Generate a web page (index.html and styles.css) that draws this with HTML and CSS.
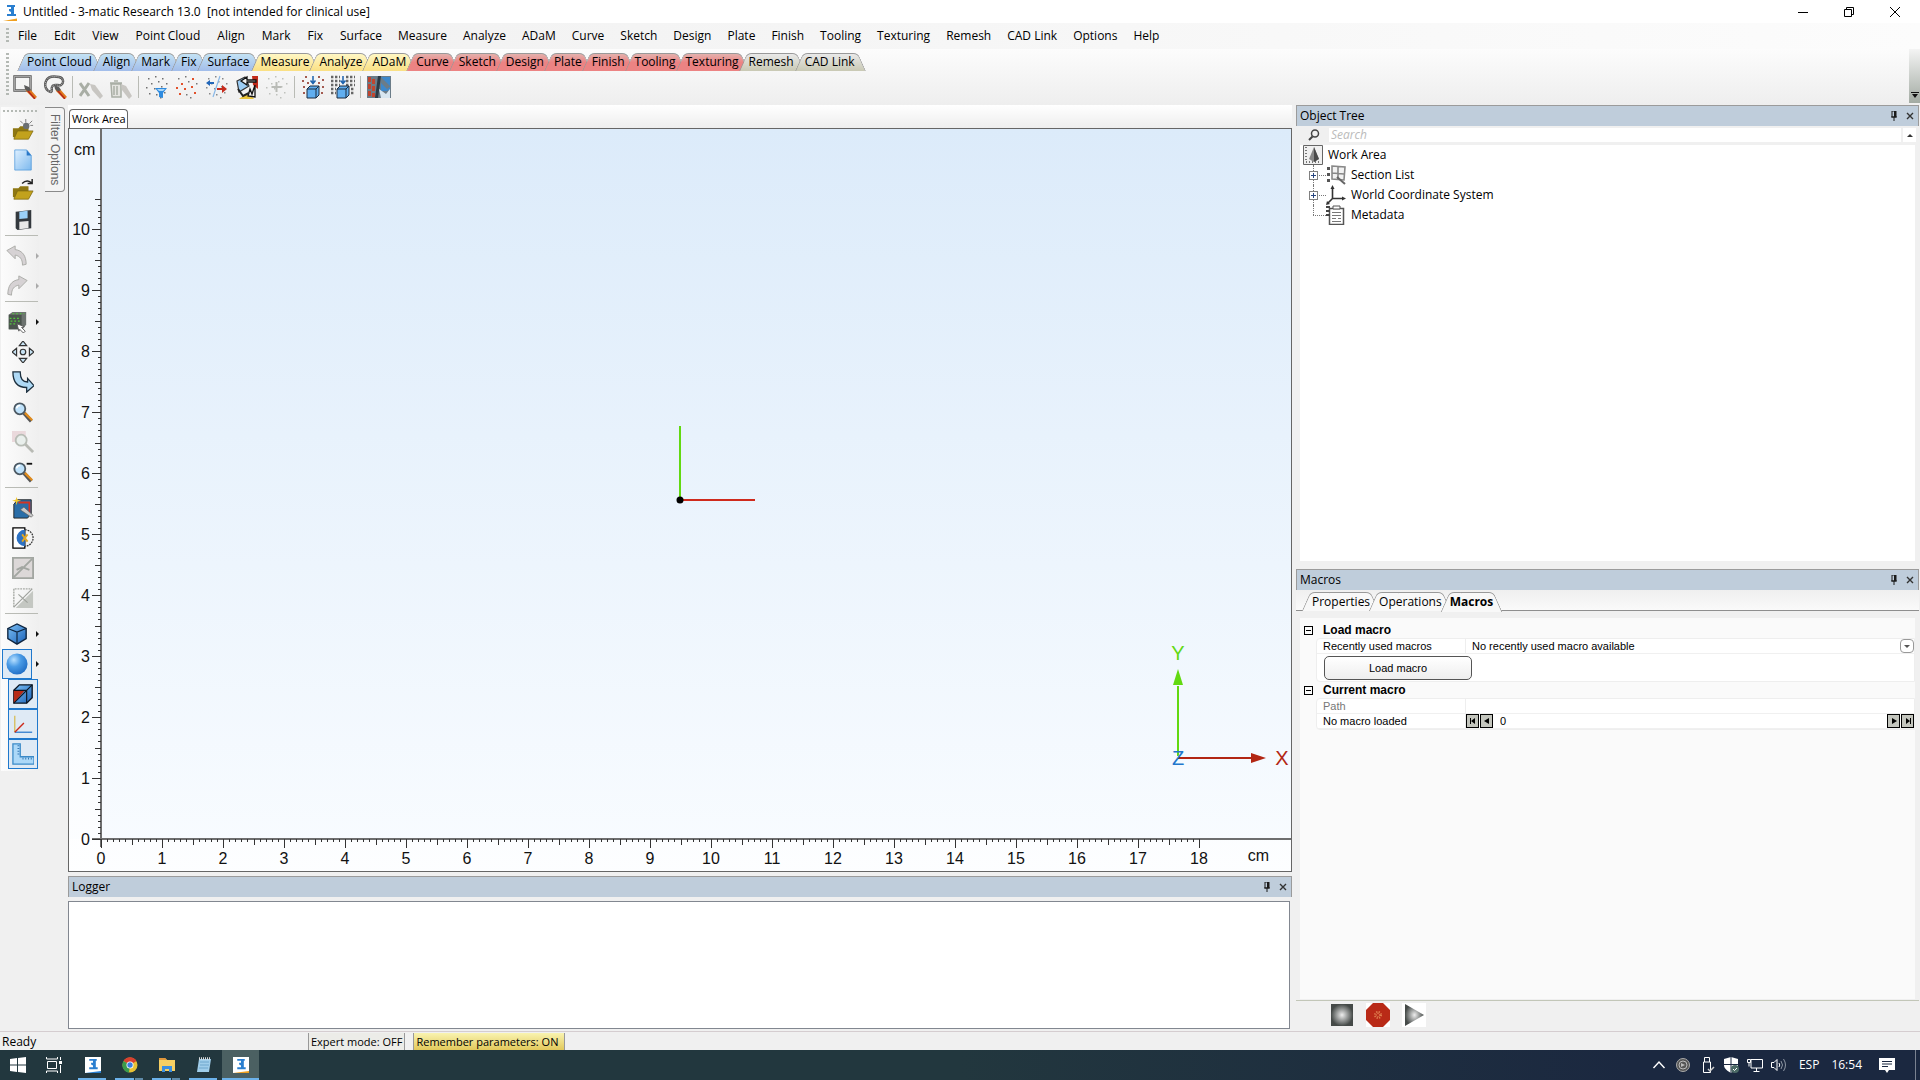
FILE: index.html
```html
<!DOCTYPE html>
<html lang="en">
<head>
    <meta charset="UTF-8">
    <meta name="viewport" content="width=device-width, initial-scale=1.0">
    <title>Untitled - 3-matic Research 13.0</title>
    <link rel="stylesheet" href="styles.css">
</head>
<body>

    <!-- shared shapes -->
    <svg class="defs" width="0" height="0" aria-hidden="true">
        <defs>
            <linearGradient id="blueGrad" x1="0" y1="0" x2="1" y2="1">
                <stop offset="0" stop-color="#7cc0f5"/><stop offset="1" stop-color="#1b62b8"/>
            </linearGradient>
            <linearGradient id="paleBlue" x1="0" y1="0" x2="1" y2="1">
                <stop offset="0" stop-color="#dff0ff"/><stop offset="1" stop-color="#7db9ee"/>
            </linearGradient>
            <radialGradient id="ball" cx="0.35" cy="0.3" r="0.75">
                <stop offset="0" stop-color="#b8e0ff"/><stop offset="0.45" stop-color="#4a9be6"/><stop offset="1" stop-color="#1f6cc4"/>
            </radialGradient>
            <radialGradient id="steel">
                <stop offset="0" stop-color="#eeeeee"/><stop offset="1" stop-color="#454a48"/>
            </radialGradient>
        </defs>
        <symbol id="brush" viewBox="0 0 24 24">
            <path d="M12 12l4 1 8 9-3 2-8-8z" fill="#e07a1c"/>
            <path d="M11 10l5 2 2 3-3 2-3-3z" fill="#5b5b5b"/>
            <path d="M15 16l7 8" stroke="#b5281a" stroke-width="1.500"/>
        </symbol>
        <symbol id="dots" viewBox="0 0 24 24">
            <path d="M3 3h1.500v1.500H3zM10 1h1.500v1.500H10zM17 3h1.500v1.500H17zM6 8h1.500v1.500H6zM13 6h1.500v1.500H13zM21 8h1.500v1.500H21zM1 12h1.500v1.500H1zM9 13h1.500v1.500H9zM16 11h1.500v1.500H16zM4 18h1.500v1.500H4zM11 19h1.500v1.500H11zM19 17h1.500v1.500H19zM15 22h1.500v1.500H15z"/>
        </symbol>
        <symbol id="box" viewBox="0 0 24 24">
            <path d="M6 14l3-3h9v9l-3 3H6z" fill="#60aef0" stroke="#1c2c40"/>
            <path d="M6 14h9v9M15 14l3-3" fill="none" stroke="#1c2c40"/>
            <path d="M12 1v7M9.500 5.500L12 8.500l2.500-3" fill="none" stroke="#1d62ad" stroke-width="1.500"/>
        </symbol>
        <symbol id="pin" viewBox="0 0 8 10">
            <path d="M2 0h4v6H2zM1 6h6M4 6v4" fill="none" stroke="#1a1a1a"/>
            <path d="M4 0h2v6H4z" fill="#1a1a1a"/>
        </symbol>
        <symbol id="close" viewBox="0 0 8 8">
            <path d="M1 1l6 6M7 1L1 7" stroke="#333" stroke-width="1.400"/>
        </symbol>
        <symbol id="lens" viewBox="0 0 24 24">
            <path d="M13 13l8 9" stroke="#555" stroke-width="4"/>
            <path d="M14 13l8 8" stroke="#e08c1e" stroke-width="2.600"/>
            <circle cx="8.500" cy="8.500" r="6" fill="#bfe2fb" stroke="#4b5862" stroke-width="2"/>
            <path d="M5 8a4 4 0 0 1 4-3" fill="none" stroke="#fff" stroke-width="1.600"/>
        </symbol>
        <symbol id="folder" viewBox="0 0 24 24">
            <path d="M1 10h6l2-2h9v12H1z" fill="#8e7713"/>
            <path d="M2 22l4-9h17l-5 9z" fill="#c2a21d" stroke="#7c6710" stroke-width="0.800"/>
        </symbol>
        <symbol id="logo" viewBox="0 0 16 16">
            <path d="M4 2h8v2h-1v7h2v2H4v-2h4V9L6 8V6h2V4H4z" fill="#2a7fd0"/>
        </symbol>
    </svg>

    <header class="title-bar">
        <svg class="app-icon" viewBox="0 0 16 18"><use href="#logo" width="16" height="16"/><path d="M0 18L14 15.500V18z" fill="#f0a020"/></svg>
        <h1>Untitled - 3-matic Research 13.0&nbsp; [not intended for clinical use]</h1>
        <div class="window-buttons">
            <button type="button" aria-label="Minimize"><svg width="12" height="12" viewBox="0 0 12 12"><path d="M1 6.500h10" stroke="#000"/></svg></button>
            <button type="button" aria-label="Restore"><svg width="12" height="12" viewBox="0 0 12 12"><path d="M1.500 3.500h7v7h-7zM3.500 3V1.500h7v7H9" fill="none" stroke="#000"/></svg></button>
            <button type="button" aria-label="Close"><svg width="12" height="12" viewBox="0 0 12 12"><path d="M1 1l10 10M11 1L1 11" stroke="#000"/></svg></button>
        </div>
    </header>

    <nav class="menu-bar">
        <span class="grip"></span>
        <button type="button">File</button>
        <button type="button">Edit</button>
        <button type="button">View</button>
        <button type="button">Point Cloud</button>
        <button type="button">Align</button>
        <button type="button">Mark</button>
        <button type="button">Fix</button>
        <button type="button">Surface</button>
        <button type="button">Measure</button>
        <button type="button">Analyze</button>
        <button type="button">ADaM</button>
        <button type="button">Curve</button>
        <button type="button">Sketch</button>
        <button type="button">Design</button>
        <button type="button">Plate</button>
        <button type="button">Finish</button>
        <button type="button">Tooling</button>
        <button type="button">Texturing</button>
        <button type="button">Remesh</button>
        <button type="button">CAD Link</button>
        <button type="button">Options</button>
        <button type="button">Help</button>
    </nav>

    <section class="ribbon">
        <span class="grip"></span>
        <div class="ribbon-body">
            <div class="ribbon-tabs">
                <button type="button" class="tab blue"><span>Point Cloud</span></button>
                <button type="button" class="tab blue"><span>Align</span></button>
                <button type="button" class="tab blue"><span>Mark</span></button>
                <button type="button" class="tab blue"><span>Fix</span></button>
                <button type="button" class="tab blue"><span>Surface</span></button>
                <button type="button" class="tab yellow"><span>Measure</span></button>
                <button type="button" class="tab yellow"><span>Analyze</span></button>
                <button type="button" class="tab yellow"><span>ADaM</span></button>
                <button type="button" class="tab red"><span>Curve</span></button>
                <button type="button" class="tab red"><span>Sketch</span></button>
                <button type="button" class="tab red"><span>Design</span></button>
                <button type="button" class="tab red"><span>Plate</span></button>
                <button type="button" class="tab red"><span>Finish</span></button>
                <button type="button" class="tab red"><span>Tooling</span></button>
                <button type="button" class="tab red"><span>Texturing</span></button>
                <button type="button" class="tab grey"><span>Remesh</span></button>
                <button type="button" class="tab grey"><span>CAD Link</span></button>
            </div>
            <div class="ribbon-tools">
                <button type="button" aria-label="Rectangle mark"><svg viewBox="0 0 24 24"><path d="M1.500 1.500h16v14h-16z" fill="#f4f4f4" stroke="#555" stroke-width="2.400"/><path d="M1.500 1.500h16v14h-16z" fill="none" stroke="#eee" stroke-width="1.200" stroke-dasharray="1 1"/><use href="#brush"/></svg></button>
                <button type="button" aria-label="Lasso mark"><svg viewBox="0 0 24 24"><path d="M8 17C3 16 1 11 3 6s8-5 13-4c5 1 5 6 2 8-3 1-8-2-9 2-1 2 1 4-1 5z" fill="#f4f4f4" stroke="#555" stroke-width="2.400"/><path d="M8 17C3 16 1 11 3 6s8-5 13-4c5 1 5 6 2 8-3 1-8-2-9 2-1 2 1 4-1 5z" fill="none" stroke="#ddd" stroke-width="0.800" stroke-dasharray="1 1"/><use href="#brush"/></svg></button>
                <span class="divider"></span>
                <button type="button" disabled aria-label="Unmark"><svg viewBox="0 0 24 24"><path d="M1 8l9 13M10 8L1 21" stroke="#a9aea5" stroke-width="3"/><path d="M11 9l5 1 8 11-3 3-8-9z" fill="#c8c6c2"/></svg></button>
                <button type="button" disabled aria-label="Delete marked"><svg viewBox="0 0 24 24"><path d="M2 9h10v13H3zM1 8h12M5 6h4M5 11v9M8 11v9" fill="#e4e4e0" stroke="#a9aea5" stroke-width="1.500"/><path d="M12 9l5 2 6 10-3 3-7-9z" fill="#c8c6c2"/></svg></button>
                <span class="divider"></span>
                <button type="button" aria-label="Filter points"><svg viewBox="0 0 24 24"><use href="#dots" fill="#707070"/><path d="M10 13h12l-4 5v5l-4-1v-4z" fill="#2d8be0"/><path d="M12 14h8l-2 2h-4z" fill="#a9d6f8"/></svg></button>
                <button type="button" aria-label="Reduce points"><svg viewBox="0 0 24 24"><use href="#dots" fill="#777"/><path d="M6 8h2v2H6zM17 3h2v2h-2zM9 13h2v2H9zM19 17h2v2h-2zM1 12h2v2H1zM16 11h2v2h-2zM4 18h2v2H4z" fill="#e2512b"/></svg></button>
                <button type="button" aria-label="Split points"><svg viewBox="0 0 24 24"><use href="#dots" fill="#888"/><path d="M15 1L8 22" stroke="#88b8e8" stroke-width="1.200"/><path d="M1 8l4-3v2h4v2H5v2z" fill="#2266b8"/><path d="M22 14l-5-4v3h-5v2h5v3z" fill="#c52a1c"/></svg></button>
                <button type="button" aria-label="Texture transfer"><svg viewBox="0 0 24 24"><path d="M2 6l8-4 4 9-10 6z" fill="#9ccdf5" stroke="#333" stroke-width="1.200"/><path d="M17 1h6v13l-5-4z" fill="#c22a1a"/><path d="M4 24q9-8 15 0z" fill="#e9c33a"/><path d="M21 5h-9V2L6 6l6 4V7h9zM20 10l-3 9-2-5-2 7 7 1z" fill="#f2f2f2" stroke="#111" stroke-width="1.300"/><path d="M3 14l5 7 6-3" fill="none" stroke="#222" stroke-width="2"/></svg></button>
                <button type="button" disabled aria-label="Add points"><svg viewBox="0 0 24 24"><use href="#dots" fill="#bfc1bd"/><path d="M10.500 7h2v4h4v2h-4v4h-2v-4h-4v-2h4z" fill="#b9bbb6"/></svg></button>
                <span class="divider"></span>
                <button type="button" aria-label="Wrap points"><svg viewBox="0 0 24 24"><path d="M4 1h2v2H4zM17 1h2v2h-2zM1 5h2v2H1zM6 7h2v2H6zM17 7h2v2h-2zM21 4h2v2h-2zM2 11h2v2H2zM21 11h2v2h-2zM2 17h2v2H2zM20 17h2v2h-2z" fill="#a35a50"/><use href="#box"/></svg></button>
                <button type="button" aria-label="Grid points"><svg viewBox="0 0 24 24"><path d="M0 2h9M0 6h9M0 10h9M0 14h5M0 18h5M15 2h9M15 6h9M15 10h9M20 14h4M20 18h4" stroke="#666" stroke-width="2.400" stroke-dasharray="2.400 1.600"/><use href="#box"/></svg></button>
                <span class="divider"></span>
                <button type="button" aria-label="Compare"><svg viewBox="0 0 24 24"><path d="M0 1h24v22H0z" fill="#6b7c88"/><path d="M1 2h3v5H1zM5 4h3v5H5zM1 9h3v5H1zM5 11h3v5H5zM1 16h3v5H1zM5 18h3v4H5z" fill="#c0452f"/><path d="M14 2h9v9zM14 8l8 8h-8zM20 14l3 8V12z" fill="#3d88cb"/><path d="M11 1h3l-3 22H8z" fill="#2c3a45"/><path d="M14 23l-2-9 7 5 4-5v9z" fill="#d8e6f0"/></svg></button>
            </div>
        </div>
        <button type="button" class="overflow" aria-label="Toolbar options"><svg width="8" height="6" viewBox="0 0 8 6"><path d="M0 0h8v1H0zM1 2h6L4 6z" fill="#111"/></svg></button>
    </section>

    <main class="workspace">
        <aside class="side-bar">
            <div class="side-tools">
                <span class="grip-h"></span>
                <button type="button" aria-label="Import"><svg viewBox="0 0 24 24"><use href="#folder"/><path d="M15 0v4M9 2l3 3M22 2l-3 3M23 7h-3" stroke="#777"/><circle cx="15.500" cy="7.500" r="3.500" fill="#6b6f72"/></svg></button>
                <button type="button" aria-label="New"><svg viewBox="0 0 24 24"><path d="M3 1h13l5 6v16H3z" fill="url(#paleBlue)" stroke="#4b97da" stroke-width="0.800"/><path d="M16 1v6h5z" fill="#2a78c8"/></svg></button>
                <button type="button" aria-label="Open"><svg viewBox="0 0 24 24"><use href="#folder"/><path d="M11 5q5-5 10-1M22 0v5h-5" fill="none" stroke="#222" stroke-width="1.600"/></svg></button>
                <button type="button" aria-label="Save"><svg viewBox="0 0 24 24"><path d="M4 3l17-2v20l-15 2-2-2z" fill="#33383d"/><path d="M8 3l9-1v8l-9 1z" fill="#9ad0f8"/><path d="M8 14l10-1v8l-10 1z" fill="#e8e8e8"/></svg></button>
                <span class="divider-h"></span>
                <button type="button" class="drop" disabled aria-label="Undo"><svg viewBox="0 0 24 24"><path d="M1 6l9-5v4c8 1 12 7 12 16l-4 1c0-7-3-10-8-11v4z" fill="#d6d2d4" stroke="#a8aaa5"/></svg></button>
                <button type="button" class="drop" disabled aria-label="Redo"><svg viewBox="0 0 24 24"><path d="M23 6l-9-5v4C6 6 2 12 2 21l4 1c0-7 3-10 8-11v4z" fill="#d6d2d4" stroke="#a8aaa5"/></svg></button>
                <span class="divider-h"></span>
                <button type="button" class="drop" aria-label="Select"><svg viewBox="0 0 24 24"><path d="M3 4l4-3h15v14l-4 5H3z" fill="#6d7370"/><path d="M3 4h14v16H3z" fill="#4a544d"/><path d="M4 8h12M5 11h11M4 14h7M7 3h13" stroke="#54c93c" stroke-width="1.300" stroke-dasharray="2 2"/><path d="M12 14l8 3-3 1 4 4-2 2-4-4-1 2z" fill="#fff" stroke="#555"/></svg></button>
                <button type="button" aria-label="Pan"><svg viewBox="0 0 24 24"><path d="M12 0l4 5H8zM12 24l4-5H8zM0 12l5-4v8zM24 12l-5-4v8z" fill="#c6e2f3" stroke="#333" stroke-width="1.300"/><circle cx="12" cy="12" r="3" fill="#c6e2f3" stroke="#333" stroke-width="1.300"/></svg></button>
                <button type="button" aria-label="Rotate"><svg viewBox="0 0 24 24"><path d="M1 1h8c0 8 3 11 8 11V8l7 8-8 7v-5C6 18 1 12 1 1z" fill="#aed9f5" stroke="#1c2f3e" stroke-width="1.400"/></svg></button>
                <button type="button" aria-label="Zoom"><svg viewBox="0 0 24 24"><use href="#lens"/></svg></button>
                <button type="button" disabled aria-label="Zoom selection"><svg viewBox="0 0 24 24"><path d="M0 0h15v12H0z" fill="#ead9dc"/><path d="M14 14l9 9" stroke="#b8bab4" stroke-width="3"/><circle cx="10" cy="10" r="6" fill="#e9efec" stroke="#b8bdb6" stroke-width="2"/></svg></button>
                <button type="button" aria-label="Unzoom"><svg viewBox="0 0 24 24"><use href="#lens"/><path d="M16 3h6" stroke="#111" stroke-width="2"/></svg></button>
                <span class="divider-h"></span>
                <button type="button" aria-label="Create section"><svg viewBox="0 0 24 24"><path d="M2 8l4-5h15v15l-4 5H2z" fill="#2b6ea8" stroke="#222"/><path d="M7 6h12v12" fill="none" stroke="#d33422" stroke-width="2"/><path d="M5 0l1 3 4 1-4 1-1 4-1-4-4-1 4-1z" fill="#f3c72a"/><path d="M9 14l4-3 10 9-2 2z" fill="#c9c9c9" stroke="#555" stroke-width="0.700"/></svg></button>
                <button type="button" aria-label="Clip"><svg viewBox="0 0 24 24"><path d="M1 1h13v22H1z" fill="#fff" stroke="#000" stroke-width="1.400"/><path d="M14 3a9 9 0 0 0 0 18z" fill="#2d72c4"/><path d="M14 3a9 9 0 0 1 0 18" fill="none" stroke="#333" stroke-width="1.300" stroke-dasharray="2 1"/><path d="M11 8l6 8M17 8l-6 8" stroke="#e2a725" stroke-width="2"/></svg></button>
                <button type="button" disabled aria-label="Flip clip"><svg viewBox="0 0 24 24"><path d="M1 1h22v22H1z" fill="#dcd8d8" stroke="#a2a6a1" stroke-width="2"/><path d="M2 22L22 2M5 14l6-3 8 3" stroke="#a2a6a1" stroke-width="2" fill="none"/></svg></button>
                <button type="button" disabled aria-label="Hide clip"><svg viewBox="0 0 24 24"><path d="M2 22V2h20" fill="none" stroke="#a7aaa5" stroke-width="1.500" stroke-dasharray="2 1"/><path d="M4 23L23 4v19z" fill="#c4c7c2"/><path d="M2 22L22 2M7 8l10 9" stroke="#9fa29d" stroke-width="1.300"/></svg></button>
                <span class="divider-h"></span>
                <button type="button" class="drop" aria-label="Standard views"><svg viewBox="0 0 24 24"><path d="M2 6l10-5 10 5v11l-10 6-10-6z" fill="url(#blueGrad)" stroke="#0e2540" stroke-width="1.500"/><path d="M2 6l10 4 10-4M12 10v13" fill="none" stroke="#0e2540" stroke-width="1.300"/></svg></button>
                <button type="button" class="drop active" aria-label="Shading"><svg viewBox="0 0 24 24"><circle cx="12" cy="12" r="11.500" fill="url(#ball)"/></svg></button>
                <button type="button" class="active" aria-label="Bounding box"><svg viewBox="0 0 24 24"><path d="M2 8l6-6h14v14l-6 6H2z" fill="url(#blueGrad)" stroke="#0c1622" stroke-width="1.500"/><path d="M2 8h12L2 22z" fill="#b72c18"/><path d="M2 8h14v14M2 22L22 2" fill="none" stroke="#0c1622" stroke-width="1.300"/></svg></button>
                <button type="button" class="active" aria-label="Axes"><svg viewBox="0 0 24 24"><path d="M3 3v18" stroke="#d8bf60" stroke-width="1.500"/><path d="M3 21h19" stroke="#3b83cf" stroke-width="1.500"/><path d="M3 21l10-10" stroke="#cc2a1a" stroke-width="1.500"/></svg></button>
                <button type="button" class="active" aria-label="Ruler"><svg viewBox="0 0 24 24"><path d="M1 1h8v14h15v8H1z" fill="#acd8f8" stroke="#3b8ac8" stroke-width="1.400"/><path d="M6 3h2M6 6h2M6 9h2M6 12h2M12 16v2M15 16v2M18 16v2M21 16v2" stroke="#2a6fae"/></svg></button>
            </div>
            <button type="button" class="filter-tab">Filter Options</button>
        </aside>

        <section class="centre">
            <div class="doc-tabs">
                <button type="button">Work Area</button>
            </div>
            <div class="viewport">
                <svg class="rulers" id="rulers"></svg>
                <svg class="origin" width="152" height="152" viewBox="0 0 152 152">
                    <path d="M76 2v74" stroke="#62d911" stroke-width="2"/>
                    <path d="M76 76h75" stroke="#cf2a1c" stroke-width="2"/>
                    <circle cx="76" cy="76" r="3.500"/>
                </svg>
                <svg class="triad" width="130" height="140" viewBox="0 -10 130 140">
                    <path d="M17 110V40" stroke="#62d911" stroke-width="2"/>
                    <path d="M17 23l5 16H12z" fill="#62d911"/>
                    <path d="M17 112h76" stroke="#b22613" stroke-width="2"/>
                    <path d="M105 112l-15-5v10z" fill="#b22613"/>
                    <text x="17" y="14" fill="#62d911">Y</text>
                    <text x="121" y="119" fill="#b22613">X</text>
                    <text x="17" y="119" fill="#2277cc">Z</text>
                </svg>
            </div>
            <div class="dock-title">
                <h2>Logger</h2>
                <button type="button" aria-label="Pin"><svg width="8" height="10"><use href="#pin"/></svg></button>
                <button type="button" aria-label="Close"><svg width="8" height="8"><use href="#close"/></svg></button>
            </div>
            <div class="log"></div>
        </section>

        <aside class="docks">
            <div class="dock-title">
                <h2>Object Tree</h2>
                <button type="button" aria-label="Pin"><svg width="8" height="10"><use href="#pin"/></svg></button>
                <button type="button" aria-label="Close"><svg width="8" height="8"><use href="#close"/></svg></button>
            </div>
            <div class="search">
                <label for="search" aria-label="Search"><svg width="12" height="12" viewBox="0 0 12 12"><circle cx="7" cy="4.500" r="3.500" fill="none" stroke="#444" stroke-width="1.500"/><path d="M4.500 7.500L1 11" stroke="#444" stroke-width="2"/></svg></label>
                <input type="text" id="search" placeholder="Search">
                <button type="button" aria-label="Collapse"><i></i></button>
            </div>
            <div class="tree">
                <div class="node root">
                    <svg viewBox="0 0 20 20"><path d="M0.500 0.500h19v19h-19z" fill="#f0f0f0" stroke="#666"/><path d="M3 2v15h15" fill="none" stroke="#777" stroke-width="2" stroke-dasharray="1 2"/><path d="M11 2l5 12-5 3-5-3z" fill="#888"/><path d="M11 2v15l5-3z" fill="#4a4a4a"/></svg>
                    <span>Work Area</span>
                </div>
                <ul>
                    <li class="node">
                        <button type="button" class="expander" aria-label="Expand"><svg viewBox="0 0 7 7"><path d="M1 3.500h5M3.500 1v5" stroke="#27457f"/></svg></button>
                        <svg viewBox="0 0 20 20"><path d="M1 2h3v3H1zM1 8h3v3H1zM1 14h3v3H1z" fill="#555"/><path d="M6 1l13 1-1 13-12-1zM12 2v12M6 8l12 1" fill="#f2f2f2" stroke="#888" stroke-width="1.600"/><path d="M11 12l8 7" stroke="#666" stroke-width="2"/></svg>
                        <span>Section List</span>
                    </li>
                    <li class="node">
                        <button type="button" class="expander" aria-label="Expand"><svg viewBox="0 0 7 7"><path d="M1 3.500h5M3.500 1v5" stroke="#27457f"/></svg></button>
                        <svg viewBox="0 0 20 20"><path d="M6.500 3v10.500H17M6.500 13.500L2 18" fill="none" stroke="#333" stroke-width="1.600"/><path d="M6.500 0l2 4h-4zM20 13.500l-4-2v4zM0 20l4-1-3-3z" fill="#333"/></svg>
                        <span>World Coordinate System</span>
                    </li>
                    <li class="node last">
                        <svg viewBox="0 0 20 20"><path d="M3.500 3.500h14v16h-14z" fill="#fff" stroke="#555" stroke-width="1.500"/><path d="M7 1h7v3H7z" fill="#fff" stroke="#555"/><path d="M6 7.500h9M6 10.500h9M6 13.500h4M12 13.500h3M6 16.500h9" stroke="#777"/><path d="M0 2h4M0 6h4M0 10h4" stroke="#444" stroke-width="2"/></svg>
                        <span>Metadata</span>
                    </li>
                </ul>
            </div>

            <div class="dock-title">
                <h2>Macros</h2>
                <button type="button" aria-label="Pin"><svg width="8" height="10"><use href="#pin"/></svg></button>
                <button type="button" aria-label="Close"><svg width="8" height="8"><use href="#close"/></svg></button>
            </div>
            <div class="dock-tabs">
                <button type="button" class="tab plain"><span>Properties</span></button>
                <button type="button" class="tab plain"><span>Operations</span></button>
                <button type="button" class="tab plain selected"><span>Macros</span></button>
            </div>
            <form class="macros">
                <h3><button type="button" class="collapser" aria-label="Collapse"><svg viewBox="0 0 7 7"><path d="M1 3.500h5" stroke="#000"/></svg></button>Load macro</h3>
                <div class="group">
                    <div class="row">
                        <label for="recent">Recently used macros</label>
                        <div class="value">
                            <select id="recent"><option>No recently used macro available</option></select>
                            <span class="combo-arrow"></span>
                        </div>
                    </div>
                    <div class="load"><button type="button">Load macro</button></div>
                </div>
                <h3><button type="button" class="collapser" aria-label="Collapse"><svg viewBox="0 0 7 7"><path d="M1 3.500h5" stroke="#000"/></svg></button>Current macro</h3>
                <div class="group">
                    <div class="row">
                        <span class="name muted">Path</span>
                        <div class="value"></div>
                    </div>
                    <div class="row">
                        <label for="step">No macro loaded</label>
                        <div class="value stepper">
                            <button type="button" aria-label="First"><svg width="6" height="6" viewBox="0 0 6 6"><path d="M0 0h1v6H0zM5 0v6L1 3z"/></svg></button>
                            <button type="button" aria-label="Previous"><svg width="6" height="6" viewBox="0 0 6 6"><path d="M5 0v6L0 3z"/></svg></button>
                            <input type="text" id="step" value="0">
                            <button type="button" aria-label="Next"><svg width="6" height="6" viewBox="0 0 6 6"><path d="M1 0v6l5-3z"/></svg></button>
                            <button type="button" aria-label="Last"><svg width="6" height="6" viewBox="0 0 6 6"><path d="M1 0v6l4-3zM5 0h1v6H5z"/></svg></button>
                        </div>
                    </div>
                </div>
            </form>
            <div class="recorder">
                <button type="button" aria-label="Stop"><svg width="24" height="24" viewBox="0 0 24 24"><path d="M1 1h22v22H1z" fill="url(#steel)"/></svg></button>
                <button type="button" aria-label="Record"><svg width="24" height="24" viewBox="0 0 24 24"><path d="M0 0h24v24H0z" fill="#fff"/><path d="M7 0h10l7 7v10l-7 7H7l-7-7V7z" fill="#b92a17"/><circle cx="12" cy="12" r="2.500" fill="none" stroke="#e08050" stroke-width="3" stroke-dasharray="1 1"/></svg></button>
                <button type="button" aria-label="Play"><svg width="24" height="24" viewBox="0 0 24 24"><path d="M0 0h24v24H0z" fill="#fff"/><path d="M3 1v22l19-11z" fill="url(#steel)"/></svg></button>
            </div>
        </aside>
    </main>

    <footer class="status-bar">
        <span class="ready">Ready</span>
        <button type="button" class="mode">Expert mode: OFF</button>
        <button type="button" class="mode on">Remember parameters: ON</button>
    </footer>

    <div class="taskbar">
        <button type="button" class="system" aria-label="Start"><svg viewBox="0 0 16 16"><path d="M0 2l7-1v6.500H0zM8 1l8-1v7.500H8zM0 8.500h7V15l-7-1zM8 8.500h8V16l-8-1z" fill="#fff"/></svg></button>
        <button type="button" class="system" aria-label="Task view"><svg viewBox="0 0 16 16"><path d="M1.500 4.500h9v7h-9zM0.500 0v2h11V0M0.500 16v-2h11v2M14.500 0v3M14.500 8v8" fill="none" stroke="#fff"/><path d="M13 4h3v3h-3z" fill="#fff"/></svg></button>
        <button type="button" class="open" aria-label="3-matic"><svg viewBox="0 0 16 16"><path d="M0 0h16v16H0z" fill="#fff"/><use href="#logo" width="16" height="15"/><path d="M0 16l16-2v2z" fill="#2a7fd0"/></svg></button>
        <button type="button" class="open stacked" aria-label="Chrome"><svg viewBox="0 0 16 16"><circle cx="8" cy="8" r="7.500" fill="#e8c034"/><path d="M8 8L1.500 4A7.500 7.500 0 0 1 14.500 4z" fill="#d8402f"/><path d="M8 8L1.500 4A7.500 7.500 0 0 0 7 15.500z" fill="#3a9b4c"/><circle cx="8" cy="8" r="3.500" fill="#fff"/><circle cx="8" cy="8" r="2.700" fill="#3b7fe0"/></svg></button>
        <button type="button" class="open stacked" aria-label="Explorer"><svg viewBox="0 0 16 16"><path d="M0 1h6l2 2h8v11H0z" fill="#f6cf63"/><path d="M0 1h6l2 2H0z" fill="#e0963a"/><path d="M3 15V9h10v6h-3v-3H6v3z" fill="#3a8ee0"/></svg></button>
        <button type="button" class="open" aria-label="Notepad"><svg viewBox="0 0 16 16"><path d="M3 2h12l-2 13H1z" fill="#9fcdea"/><path d="M4 5h9M4 8h9M3 11h9" stroke="#6ea6cc"/><path d="M3 1.500h12" stroke="#ddd" stroke-width="2.500" stroke-dasharray="1 1"/></svg></button>
        <button type="button" class="open current" aria-label="3-matic Research"><svg viewBox="0 0 16 16"><path d="M0 0h16v16H0z" fill="#fff"/><use href="#logo" width="16" height="15"/><path d="M0 16l16-2v2z" fill="#f0a020"/></svg></button>

        <div class="tray">
            <svg viewBox="0 0 16 16"><path d="M2.500 11L8 5l5.500 6" fill="none" stroke="#fff" stroke-width="1.400"/></svg>
            <svg viewBox="0 0 16 16"><circle cx="8" cy="8" r="6.500" fill="#555" stroke="#aaa"/><circle cx="8" cy="8" r="4" fill="none" stroke="#bbb"/><path d="M6 6l4 2-4 2z" fill="#bbb"/></svg>
            <svg viewBox="0 0 16 16"><path d="M5.500 5V.5h5V5M4.500 5h7v10.500h-7z" fill="none" stroke="#fff"/><path d="M9 12l2 2 4-4" fill="none" stroke="#ccc" stroke-width="1.500"/></svg>
            <svg viewBox="0 0 16 16"><path d="M8 0l7 2v6c0 4-4 6-7 8-3-2-7-4-7-8V2z" fill="#fff"/><path d="M8 0v16M1 7.500h14" stroke="#1b2840"/><circle cx="12" cy="12" r="4" fill="#4c6a66"/><path d="M10 12l1.500 1.500L14 11" fill="none" stroke="#fff"/></svg>
            <svg viewBox="0 0 16 16"><path d="M4 2.500h11.500v8.500H4zM9.500 11v3M6.500 14.500h6M.5 2.500h3v3h-3zM2 5.500v4" fill="none" stroke="#fff"/></svg>
            <svg viewBox="0 0 16 16"><path d="M.5 5.500H3l3-3v11l-3-3H.5z" fill="none" stroke="#fff"/><path d="M8 6q1.500 2 0 4" fill="none" stroke="#fff"/><path d="M10 4q3 4 0 8M12.500 2q4 6 0 12" fill="none" stroke="#8d96a3"/></svg>
            <span class="lang">ESP</span>
            <time>16:54</time>
            <svg viewBox="0 0 16 16"><path d="M0 1h16v12h-6l-2 3-2-3H0z" fill="#fff"/><path d="M3 4.500h10M3 7h10M3 9.500h6" stroke="#1b2840"/></svg>
        </div>
    </div>

    <script>
        // One centimetre on screen, and the width of the ruler strips
        var CM = 61;
        var STRIP = 32;
        var svg = document.getElementById('rulers');

        function add(name, attrs, text) {
            var el = document.createElementNS('http://www.w3.org/2000/svg', name);
            for (var key in attrs) {
                el.setAttribute(key, attrs[key]);
            }
            if (text !== undefined) {
                el.textContent = text;
            }
            svg.appendChild(el);
        }

        function drawRulers() {
            var w = svg.clientWidth;
            var h = svg.clientHeight;
            var x0 = STRIP;
            var y0 = h - STRIP;
            var i, pos, len, path = '';
            svg.innerHTML = '';

            add('path', { d: 'M' + x0 + ' 0V' + (y0 + 8) + 'M' + (x0 - 9) + ' ' + y0 + 'H' + w, 'class': 'axis' });

            for (i = 0; i * CM / 10 < w - 120; i++) {
                pos = Math.round(x0 + i * CM / 10);
                len = i % 10 === 0 ? 9 : i % 5 === 0 ? 6 : 3;
                path += 'M' + pos + ' ' + y0 + 'v' + len;
                if (i % 10 === 0) {
                    add('text', { x: pos, y: y0 + 25, 'text-anchor': 'middle' }, i / 10);
                }
            }
            for (i = 0; i * CM / 10 < y0 - 65; i++) {
                pos = Math.round(y0 - i * CM / 10);
                len = i % 10 === 0 ? 9 : i % 5 === 0 ? 6 : 3;
                path += 'M' + x0 + ' ' + pos + 'h-' + len;
                if (i % 10 === 0) {
                    add('text', { x: x0 - 11, y: pos + 6, 'text-anchor': 'end' }, i / 10);
                }
            }
            add('path', { d: path, 'class': 'ticks' });
            add('text', { x: 5, y: 26 }, 'cm');
            add('text', { x: w - 22, y: y0 + 22, 'text-anchor': 'end' }, 'cm');
        }

        drawRulers();
        window.addEventListener('resize', drawRulers);
    </script>

</body>
</html>
```
FILE: styles.css
```css
* {
    box-sizing: border-box;
}

body {
    margin: 0;
    height: 100vh;
    display: flex;
    flex-direction: column;
    background-color: #f0f0f0;
    font-family: "Open Sans", "Noto Sans", sans-serif;
    font-size: 12px;
    line-height: 16px;
    color: #000;
    overflow: hidden;
}

button {
    margin: 0;
    padding: 0;
    border: none;
    background: none;
    font: inherit;
    color: inherit;
}

h1, h2, h3 {
    margin: 0;
    font-size: 12px;
    font-weight: normal;
}

svg {
    display: block;
}

.defs {
    position: absolute;
}

/* Title bar */
.title-bar {
    height: 23px;
    flex: none;
    display: flex;
    align-items: center;
    padding-left: 3px;
    background-color: #fff;
}

.app-icon {
    width: 16px;
    height: 18px;
    margin-right: 4px;
}

.window-buttons {
    display: flex;
    margin-left: auto;
    padding-right: 2px;
}

.window-buttons button {
    width: 46px;
    display: flex;
    justify-content: center;
}

/* Menu */
.menu-bar {
    height: 26px;
    flex: none;
    display: flex;
    align-items: center;
    gap: 17px;
    background: linear-gradient(to right, #f0f0f0, #fcfcfc);
}

.menu-bar button:nth-child(n+10) {
    margin-left: -1px;
}

.grip {
    width: 3px;
    height: 16px;
    margin: 0 -8px 0 6px;
    background: repeating-linear-gradient(#b4b9b4 0 2px, transparent 2px 4px);
}

/* Ribbon */
.ribbon {
    height: 56px;
    flex: none;
    display: flex;
    background: linear-gradient(#fcfcfc, #eeeeee);
}

.ribbon .grip {
    height: 44px;
    margin: 4px 0 0 6px;
}

.ribbon-body {
    flex: 1;
    padding: 4px 0 0 8px;
}

.ribbon-tabs {
    display: flex;
}

.tab {
    position: relative;
    height: 18px;
    margin-right: -10px;
    padding: 0 11px 0 10px;
}

.tab span {
    position: relative;
    z-index: 1;
}

.tab::before,
.tab::after {
    content: "";
    position: absolute;
    top: 0;
    bottom: 0;
    background: inherit;
    border-top: 1px solid #999;
}

/* slanted halves of the tab */
.tab::before {
    left: 4px;
    right: 40%;
    border-left: 1px solid #999;
    border-radius: 5px 0 0 0;
    transform: skewX(-24deg);
}

.tab::after {
    left: 40%;
    right: 4px;
    border-right: 1px solid #999;
    border-radius: 0 5px 0 0;
    transform: skewX(24deg);
}

.yellow,
.red {
    padding-right: 10px;
}

.blue::before, .blue::after {
    background: linear-gradient(#c3e2f4, #a2bdea);
}

.yellow::before, .yellow::after {
    background: linear-gradient(#fff7c4, #fae084);
}

.red::before, .red::after {
    background: linear-gradient(#e3b1ad, #ec8383 50%);
}

.grey::before, .grey::after {
    background: linear-gradient(#e9e9e9, #c9c9b4);
}

.ribbon-tools {
    display: flex;
    align-items: center;
    gap: 6px;
    height: 24px;
    margin: 4px 0 0 -4px;
}

.ribbon-tools button {
    width: 24px;
    height: 24px;
}

.divider {
    width: 1px;
    height: 22px;
    margin-left: -1px;
    background-color: #b9bbb5;
}

.overflow {
    width: 11px;
    display: flex;
    align-items: flex-end;
    justify-content: center;
    padding-bottom: 5px;
    background: linear-gradient(#f4f4f4, #a3aba3);
    border-bottom: 2px solid #f0f0f0;
}

/* Main area */
.workspace {
    flex: 1;
    min-height: 0;
    display: flex;
}

.side-bar {
    width: 68px;
    flex: none;
    display: flex;
    align-items: flex-start;
    padding: 2px 0 0 1px;
    gap: 6px;
}

.side-tools {
    width: 38px;
    display: flex;
    flex-direction: column;
    align-items: flex-end;
    padding-right: 1px;
    padding-bottom: 2px;
    background: linear-gradient(to right, #fcfcfc, #efefef);
}

.side-tools button {
    position: relative;
    width: 30px;
    height: 30px;
    padding: 3px;
    border: 1px solid transparent;
}

.side-tools svg {
    width: 22px;
    height: 22px;
}

.side-tools button.active {
    background-color: #dfeaf5;
    border-color: #1f78cc;
}

.side-tools .drop {
    align-self: flex-start;
    margin-left: 1px;
}

.drop::after {
    content: "";
    position: absolute;
    left: 33px;
    top: 11px;
    border: 3px solid transparent;
    border-left-color: #111;
    border-right: none;
}

.drop:disabled::after {
    border-left-color: #aaa;
}

.grip-h {
    width: 35px;
    height: 2px;
    margin: 3px 0;
    background: repeating-linear-gradient(to right, #b4b9b4 0 2px, transparent 2px 4px);
}

.divider-h {
    width: 33px;
    height: 6px;
    border-top: 1px solid #b9bbb5;
}

.filter-tab {
    width: 20px;
    height: 85px;
    writing-mode: vertical-rl;
    font-family: "Liberation Sans", Arial, sans-serif;
    color: #666;
    background-color: #f4f4f4;
    border: 1px solid #8a8a8a;
    border-left: none;
    border-radius: 0 4px 4px 0;
}

.centre {
    flex: 1;
    min-width: 0;
    display: flex;
    flex-direction: column;
}

.doc-tabs {
    height: 23px;
    flex: none;
    padding: 4px 0 0 1px;
    background: linear-gradient(#fff, #eee);
}

.doc-tabs button {
    height: 19px;
    padding: 0 1px 0 2px;
    font-size: 11px;
    background-color: #fff;
    border: 1px solid #666;
    border-bottom: none;
    border-radius: 4px 4px 0 0;
}

.viewport {
    position: relative;
    flex: 1;
    min-height: 0;
    border: 1px solid #666;
    background: linear-gradient(#dcebfa, #f9fcff);
}

.rulers {
    width: 100%;
    height: 100%;
    font-family: "Liberation Sans", Arial, sans-serif;
    font-size: 16px;
    fill: #111;
    background:
        linear-gradient(rgba(255, 255, 255, 0.6), rgba(255, 255, 255, 0.6)) left / 32px 100% no-repeat,
        linear-gradient(rgba(255, 255, 255, 0.6), rgba(255, 255, 255, 0.6)) bottom / 100% 32px no-repeat;
}

.axis {
    stroke: #6e6e6e;
    stroke-width: 2px;
    fill: none;
}

.ticks {
    stroke: #333;
    stroke-width: 1px;
    shape-rendering: crispEdges;
}

/* overlays that float on the scene */
.origin {
    position: absolute;
    left: calc(50% - 76px);
    top: calc(50% - 76px);
}

.triad {
    position: absolute;
    right: 0;
    bottom: 95px;
    font-family: "Liberation Sans", Arial, sans-serif;
    font-size: 20px;
    text-anchor: middle;
}

.dock-title {
    height: 21px;
    flex: none;
    display: flex;
    align-items: center;
    gap: 8px;
    padding: 0 4px 0 3px;
    background-color: #bfcddb;
    border: 1px solid #9b9b9b;
    border-bottom: none;
}

.dock-title h2 {
    flex: 1;
}

.centre .dock-title {
    margin-top: 4px;
}

.log {
    height: 128px;
    flex: none;
    margin: 4px 2px 2px 0;
    background-color: #fff;
    border: 1px solid #828790;
}

/* Right docks */
.docks {
    width: 628px;
    flex: none;
    display: flex;
    flex-direction: column;
    padding: 0 1px 0 4px;
}

.search {
    display: flex;
    align-items: center;
    height: 14px;
    margin: 2px 3px 3px 12px;
}

.search label {
    width: 21px;
}

.search input {
    flex: 1;
    height: 14px;
    margin-right: 2px;
    padding: 0 2px;
    border: none;
    font: italic 12px/14px "Open Sans", "Noto Sans", sans-serif;
}

.search input::placeholder {
    color: #bbb;
}

.search button {
    width: 13px;
    height: 14px;
    display: flex;
    align-items: center;
    justify-content: center;
    background-color: #fff;
}

.search i {
    border: 3px solid transparent;
    border-bottom-color: #333;
    border-top: none;
}

.tree {
    flex: 1;
    margin: 0 4px 8px;
    padding-left: 3px;
    background-color: #fff;
}

.tree ul {
    margin: 0 0 0 10px;
    padding: 0;
    list-style: none;
}

.node {
    position: relative;
    display: flex;
    align-items: center;
    height: 20px;
}

.node > svg {
    width: 20px;
    height: 20px;
    margin-right: 5px;
}

li.node {
    padding-left: 13px;
}

/* dotted branch lines */
li.node::before {
    content: "";
    position: absolute;
    left: 0;
    top: 0;
    bottom: 0;
    border-left: 1px dotted #777;
}

li.last::before {
    bottom: 10px;
}

li.node::after {
    content: "";
    position: absolute;
    left: 0;
    top: 10px;
    width: 13px;
    border-top: 1px dotted #777;
}

.expander {
    position: absolute;
    z-index: 1;
    left: -4px;
    top: 6px;
    width: 9px;
    height: 9px;
    background-color: #fff;
    border: 1px solid #808080;
}

.dock-tabs {
    display: flex;
    flex: none;
    height: 21px;
    padding: 2px 0 0 6px;
    background: linear-gradient(#efefef, #fafafa);
    border-bottom: 1px solid #8e8e8e;
}

.plain {
    height: 19px;
    padding-right: 9px;
}

.plain::before, .plain::after {
    background-color: #f8f8f8;
}

.selected {
    height: 20px;
    padding-left: 9px;
    font-weight: bold;
}

.macros {
    height: 381px;
    flex: none;
    margin: 7px 4px 1px;
    padding-top: 4px;
    background-color: #fafafa;
    font-family: "Liberation Sans", Arial, sans-serif;
    font-size: 11px;
    line-height: 14px;
}

.macros h3 {
    display: flex;
    align-items: center;
    height: 16px;
    padding-left: 4px;
    font-weight: bold;
}

.collapser {
    width: 9px;
    height: 9px;
    margin-right: 10px;
    border: 1px solid #000;
}

.group {
    margin-left: 16px;
    background-color: #fff;
    border: 1px solid #eee;
    border-radius: 4px 0 0 4px;
}

.row {
    display: flex;
    height: 15px;
    border-bottom: 1px solid #f0f0f0;
}

.row label,
.row .name {
    width: 149px;
    padding-left: 6px;
    border-right: 1px solid #eee;
}

.row .muted {
    color: #777;
}

.value {
    flex: 1;
    display: flex;
    align-items: center;
}

.value select,
.value input {
    flex: 1;
    min-width: 0;
    height: 14px;
    padding: 0 6px;
    border: none;
    appearance: none;
    background: none;
    font: inherit;
    color: #000;
}

.combo-arrow {
    width: 14px;
    height: 14px;
    padding: 5px 3px;
    border: 1px solid #999;
    border-radius: 4px;
}

.combo-arrow::before {
    content: "";
    display: block;
    border: 3px solid transparent;
    border-top-color: #555;
    border-bottom: none;
}

.load {
    padding: 2px 7px 1px;
}

.load button {
    width: 148px;
    height: 24px;
    background: linear-gradient(#fff, #eee);
    border: 1px solid #555;
    border-radius: 5px;
}

.stepper {
    gap: 1px;
}

.stepper button {
    width: 13px;
    height: 14px;
    display: flex;
    align-items: center;
    justify-content: center;
    background-color: #c3c5bd;
    border: 1px solid #000;
}

.recorder {
    height: 31px;
    flex: none;
    display: flex;
    align-items: flex-start;
    gap: 12px;
    padding: 2px 34px;
    border-top: 1px solid #c2c6b8;
}

/* Status bar */
.status-bar {
    height: 19px;
    flex: none;
    display: flex;
    align-items: flex-end;
    border-top: 1px solid #d5cdd0;
}

.ready {
    width: 308px;
    padding-left: 2px;
}

.mode {
    height: 17px;
    padding: 0 2px;
    margin-right: 8px;
    font-size: 11px;
    background-color: #ecece8;
    border: 1px solid #999;
    border-width: 0 1px;
}

.mode.on {
    padding-right: 6px;
    background: linear-gradient(#f9f3b0, #e2c95c);
}

/* Windows taskbar */
.taskbar {
    height: 30px;
    flex: none;
    display: flex;
    background: linear-gradient(to right, #22373e 50%, #1b2840 85%);
    color: #fff;
}

.taskbar svg {
    width: 16px;
    height: 16px;
}

.taskbar button {
    position: relative;
    width: 37px;
    display: flex;
    align-items: center;
    justify-content: center;
}

.taskbar .system {
    width: 36px;
}

.system + .open {
    margin-left: 2px;
}

.taskbar .open::after {
    content: "";
    position: absolute;
    left: 4px;
    right: 5px;
    bottom: 0;
    height: 2px;
    background-color: #6cb2ea;
}

.taskbar .stacked::after {
    background: linear-gradient(to right, #6cb2ea 19px, #22373e 19px 20px, #5f8aa8 20px);
}

.taskbar .current {
    background-color: #4b6062;
}

.taskbar .current::after {
    left: 0;
    right: 0;
}

.tray {
    display: flex;
    align-items: center;
    gap: 8px;
    margin: 0 4px 0 auto;
    padding-right: 20px;
    border-right: 1px solid #7a8290;
}

.lang {
    margin-left: 4px;
}

.tray time {
    margin: 0 9px 0 4px;
}
```
